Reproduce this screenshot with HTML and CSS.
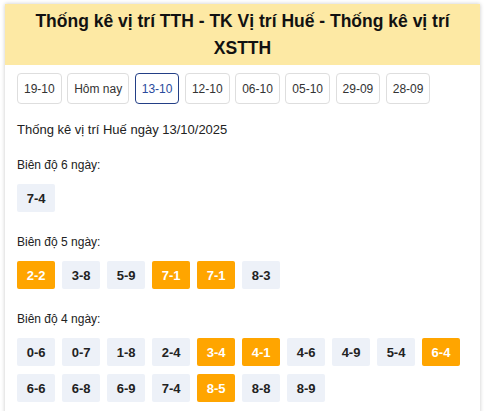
FILE: index.html
```html
<!DOCTYPE html>
<html lang="vi">
<head>
<meta charset="utf-8">
<title>Thống kê vị trí TTH</title>
<link rel="stylesheet" href="styles.css">
</head>
<body>
<div class="box">
  <h1 class="head">Thống kê vị trí TTH - TK Vị trí Huế - Thống kê vị trí XSTTH</h1>
  <div class="content">
    <nav class="dates">
      <a class="date">19-10</a>
      <a class="date">Hôm nay</a>
      <a class="date active">13-10</a>
      <a class="date">12-10</a>
      <a class="date">06-10</a>
      <a class="date">05-10</a>
      <a class="date">29-09</a>
      <a class="date">28-09</a>
    </nav>
    <p class="title">Thống kê vị trí Huế ngày 13/10/2025</p>

    <div class="group">
      <p class="label">Biên độ 6 ngày:</p>
      <div class="chips">
        <span class="chip">7-4</span>
      </div>
    </div>

    <div class="group">
      <p class="label">Biên độ 5 ngày:</p>
      <div class="chips">
        <span class="chip hot">2-2</span>
        <span class="chip">3-8</span>
        <span class="chip">5-9</span>
        <span class="chip hot">7-1</span>
        <span class="chip hot">7-1</span>
        <span class="chip">8-3</span>
      </div>
    </div>

    <div class="group">
      <p class="label">Biên độ 4 ngày:</p>
      <div class="chips">
        <span class="chip">0-6</span>
        <span class="chip">0-7</span>
        <span class="chip">1-8</span>
        <span class="chip">2-4</span>
        <span class="chip hot">3-4</span>
        <span class="chip hot">4-1</span>
        <span class="chip">4-6</span>
        <span class="chip">4-9</span>
        <span class="chip">5-4</span>
        <span class="chip hot">6-4</span>
        <span class="chip">6-6</span>
        <span class="chip">6-8</span>
        <span class="chip">6-9</span>
        <span class="chip">7-4</span>
        <span class="chip hot">8-5</span>
        <span class="chip">8-8</span>
        <span class="chip">8-9</span>
      </div>
    </div>
  </div>
</div>
</body>
</html>
```

FILE: styles.css
```css
* { box-sizing: border-box; }

html, body {
  margin: 0;
  padding: 0;
  background: #ffffff;
  font-family: "Liberation Sans", Arial, sans-serif;
  color: #222;
}

.box {
  margin: 4px 5px 0 5px;
  width: 475px;
  background: #fff;
  box-shadow: 0 0 4px rgba(0, 0, 0, 0.22);
  padding-bottom: 20px;
}

.head {
  margin: 0;
  background: #fde9a4;
  padding: 4px 14px 3px;
  font-size: 17.5px;
  line-height: 27px;
  font-weight: bold;
  text-align: center;
  color: #111;
}

.content {
  padding: 8px 12px 0;
}

.dates {
  display: flex;
  gap: 5.5px;
}

.date {
  display: flex;
  align-items: center;
  height: 31px;
  padding: 0 6px;
  border: 1px solid #dedede;
  border-radius: 4px;
  font-size: 12px;
  color: #333;
}

.date.active {
  border-color: #233f86;
  color: #2a4a9c;
}

.title {
  margin: 18px 0 0;
  font-size: 13px;
  line-height: 16px;
  color: #222;
}

.group {
  margin-top: 19px;
}

.group + .group {
  margin-top: 22px;
}

.label {
  margin: 0 0 11px;
  font-size: 12px;
  line-height: 16px;
  color: #222;
}

.chips {
  display: flex;
  flex-wrap: wrap;
  gap: 8px 6.7px;
}

.chip {
  display: flex;
  align-items: center;
  justify-content: center;
  width: 38.3px;
  height: 28px;
  border-radius: 2px;
  background: #edf1f8;
  font-size: 13px;
  font-weight: bold;
  color: #222;
}

.chip.hot {
  background: #ffa500;
  color: #fff;
}
```
